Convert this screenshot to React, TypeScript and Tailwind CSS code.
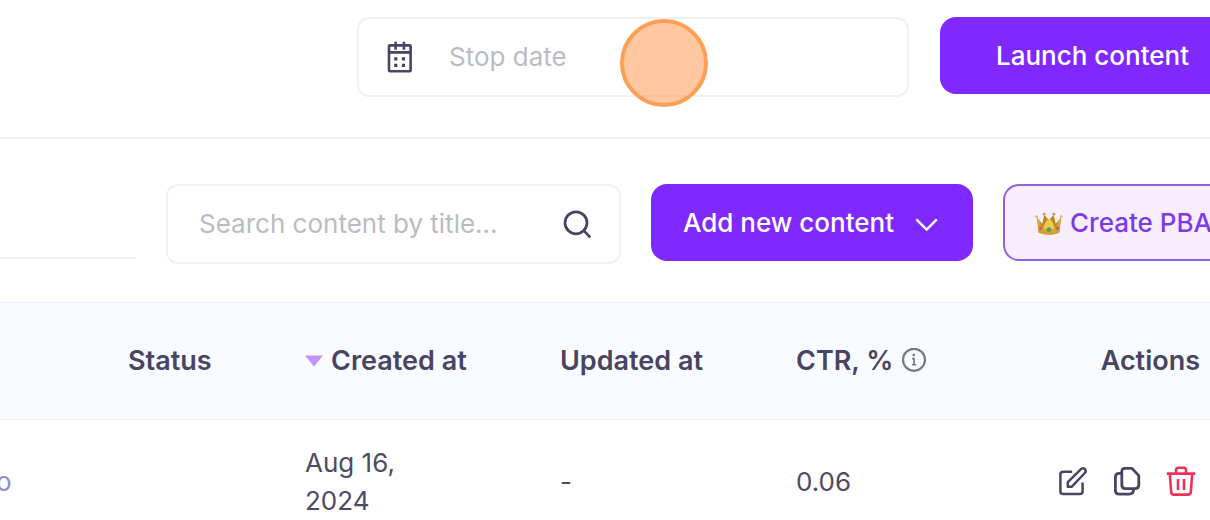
const columns = ['Status', 'Created at', 'Updated at', 'CTR, %', 'Actions']

function CalendarIcon() {
  return (
    <svg className="w-[26px] h-8 shrink-0" viewBox="0 0 26 32" fill="none" stroke="#4a4463" strokeWidth="2.6" aria-hidden="true">
      <rect x="2" y="4.4" width="21.6" height="25.8" rx="1" />
      <path d="M2 11.4h21.6M8.6 0.8v8M16.9 0.8v8" />
      <path d="M7.2 17.8h3.2M14.9 17.8h3.2M7.2 24.3h3.2M14.9 24.3h3.2" strokeWidth="3.2" />
    </svg>
  )
}

function SearchIcon() {
  return (
    <svg className="size-[30px]" viewBox="0 0 30 30" fill="none" stroke="#4a4463" strokeWidth="2.8" aria-hidden="true">
      <circle cx="13" cy="13.8" r="11" />
      <path d="M20.6 21.4 27.2 28.4" />
    </svg>
  )
}

function ChevronIcon() {
  return (
    <svg className="w-6 h-4" viewBox="0 0 24 16" fill="none" stroke="currentColor" strokeWidth="2.4" aria-hidden="true">
      <path d="M2.4 4.4 12.6 14.6 22.8 4.4" />
    </svg>
  )
}

function CrownIcon() {
  return (
    <svg className="w-7 h-6" viewBox="0 0 28 24" aria-hidden="true">
      <path d="M1.6 5.5 3.4 21.5Q14 26 24.6 21.5L26.4 5.5 20.6 13 18.6 4 14 9.6 9.4 4 7.4 13Z" fill="#d9a62e" />
      <path d="M9.4 4 7.4 13 4.6 10.5 7 16 12 13.5 14 9.6ZM18.6 4 20.6 13 23.4 10.5 21 16 16 13.5 14 9.6Z" fill="#b98424" />
      <path d="M14 7.6C10.5 9.8 9 13.4 8.6 17.5Q14 19.6 19.4 17.5C19 13.4 17.5 9.8 14 7.6Z" fill="#efcb4a" />
      <path d="M3.2 18.4Q14 23 24.8 18.4L24.4 21.8Q14 25.6 3.6 21.8Z" fill="#cfa238" />
      <circle cx="1.6" cy="5.4" r="1.2" fill="#d4b062" />
      <circle cx="26.4" cy="5.4" r="1.2" fill="#d4b062" />
      <circle cx="9.2" cy="3.2" r="1.4" fill="#c79a3c" />
      <circle cx="18.8" cy="3.2" r="1.4" fill="#c79a3c" />
      <circle cx="14" cy="18.6" r="2.3" fill="#3fa06c" />
      <circle cx="5.8" cy="17.2" r="1.7" fill="#cf5568" />
      <circle cx="22.2" cy="17.2" r="1.7" fill="#cf5568" />
    </svg>
  )
}

function InfoIcon() {
  return (
    <svg className="size-[26px]" viewBox="0 0 26 26" fill="none" stroke="#77767f" strokeWidth="2.2" aria-hidden="true">
      <circle cx="13" cy="11.8" r="11" />
      <path d="M11.2 10.6H13V16.8M11 16.8h4.2" strokeWidth="1.6" />
      <circle cx="12.8" cy="7" r="1.3" fill="#77767f" stroke="none" />
    </svg>
  )
}

function EditIcon() {
  return (
    <svg className="size-[30px]" viewBox="0 0 30 30" fill="none" stroke="#4a4463" strokeWidth="2.5" strokeLinejoin="round" aria-hidden="true">
      <path d="M14.2 5.8H5.2Q2.4 5.8 2.4 8.6V25.2Q2.4 28 5.2 28H21.8Q24.6 28 24.6 25.2V16.4" />
      <path d="M9.8 20.8V16.2L23 3.1Q25 1.4 26.8 3.2 28.6 5.2 26.8 7L13.6 20.8Z" />
    </svg>
  )
}

function CopyIcon() {
  return (
    <svg className="size-[30px]" viewBox="0 0 30 30" fill="none" stroke="#4a4463" strokeWidth="2.8" strokeLinejoin="round" aria-hidden="true">
      <path d="M12.6 2.4H20L26.8 9.6V18.8Q26.8 22.6 23 22.6H13.4Q9.8 22.6 9.8 18.8V5.6Q9.8 2.4 12.6 2.4Z" />
      <path d="M9.6 7.4H7.2Q3.4 7.4 3.4 11.2V24.6Q3.4 28.2 7.2 28.2H17Q21.6 28.2 21.8 22.8" />
    </svg>
  )
}

function TrashIcon() {
  return (
    <svg className="size-[30px]" viewBox="0 0 30 30" fill="none" stroke="#ee3158" strokeWidth="2.6" strokeLinejoin="round" aria-hidden="true">
      <path d="M0.8 7.6H29.2M10 7.4V4Q10 1.8 12.2 1.8H17.8Q20 1.8 20 4V7.4" />
      <path d="M3.8 8 5.2 26.2Q5.4 28.6 7.8 28.6H22.2Q24.6 28.6 24.8 26.2L26.2 8" />
      <path d="M12 13V24M18 13V24" />
    </svg>
  )
}

export default function App() {
  return (
    <div className="h-screen overflow-hidden bg-white font-['Inter',sans-serif] text-[26px] leading-[38px] text-[#4f4a63]">
      {/* Schedule bar */}
      <header className="flex items-start gap-[31px] border-b-2 border-[#f1f1f3] pt-[17px] pb-10 pl-[357px]">
        <label className="relative flex h-20 flex-1 min-w-0 items-center gap-9 rounded-xl border-2 border-[#f1f1f3] px-7">
          <CalendarIcon />
          <input
            type="text"
            aria-label="Stop date"
            placeholder="Stop date"
            className="min-w-0 flex-1 bg-transparent outline-none placeholder:text-[#bcbbc5]"
          />
          {/* Click marker */}
          <span className="pointer-events-none absolute top-0 left-[261px] size-[88px] rounded-full border-4 border-[#ff9f55] bg-[#ff9142]/50" />
        </label>
        <button type="button" className="h-[77px] w-[270px] shrink-0 rounded-l-2xl bg-[#8029ff] pl-14 text-left font-medium whitespace-nowrap text-white">
          Launch content
        </button>
      </header>

      {/* Toolbar */}
      <div className="flex items-start gap-[30px] pt-[45px] pb-[38px]">
        <div className="h-[75px] w-[136px] shrink-0 border-b-2 border-[#f1f1f3]" />
        <label className="flex h-20 flex-1 min-w-0 items-center rounded-xl border-2 border-[#f1f1f3] pr-[26px] pl-[31px]">
          <input
            type="search"
            aria-label="Search content by title"
            placeholder="Search content by title..."
            className="min-w-0 flex-1 bg-transparent outline-none placeholder:text-[#bcbbc5]"
          />
          <SearchIcon />
        </label>
        <button type="button" className="flex h-[77px] w-[322px] shrink-0 items-center justify-between rounded-2xl bg-[#8029ff] pr-[35px] pl-8 font-medium whitespace-nowrap text-white">
          Add new content
          <ChevronIcon />
        </button>
        <button type="button" className="flex h-[77px] w-[207px] shrink-0 items-center gap-[7px] overflow-hidden rounded-l-2xl border-2 border-r-0 border-[#9160dc] bg-[#f6eeff] pl-[30px] font-medium whitespace-nowrap text-[#7d3be6]">
          <span className="shrink-0"><CrownIcon /></span>
          Create PBA
        </button>
      </div>

      <table className="w-full table-fixed border-collapse text-left">
        <colgroup>
          <col className="w-32" />
          <col className="w-[177px]" />
          <col className="w-[255px]" />
          <col className="w-[236px]" />
          <col />
          <col className="w-[180px]" />
        </colgroup>
        <thead>
          <tr className="h-[117px] border-y border-[#eff0f7] bg-[#f8fbff] text-[27px] text-[#4a4463]">
            <th aria-label="Title" />
            {columns.map(name => (
              <th key={name} className="p-0 font-semibold whitespace-nowrap last:pr-2.5">
                <span className={`flex items-center gap-2 ${name === 'Actions' ? 'justify-end' : ''}`}>
                  {name === 'Created at' && (
                    <svg className="w-[18px] h-3" viewBox="0 0 18 12" aria-hidden="true">
                      <path d="M0 0.5H18L9 11.5Z" fill="#bf94fb" />
                    </svg>
                  )}
                  {name}
                  {name === 'CTR, %' && <InfoIcon />}
                </span>
              </th>
            ))}
          </tr>
        </thead>
        <tbody>
          <tr>
            <td className="p-0"><a href="#" className="block -ml-1 text-[#8f8dcb]">o</a></td>
            <td />
            <td className="px-0 py-6">Aug 16,<br />2024</td>
            <td className="p-0">-</td>
            <td className="p-0">0.06</td>
            <td className="p-0 pr-3.5">
              <div className="flex justify-end gap-6 pb-0.5">
                <button type="button" aria-label="Edit"><EditIcon /></button>
                <button type="button" aria-label="Copy"><CopyIcon /></button>
                <button type="button" aria-label="Delete"><TrashIcon /></button>
              </div>
            </td>
          </tr>
        </tbody>
      </table>
    </div>
  )
}
